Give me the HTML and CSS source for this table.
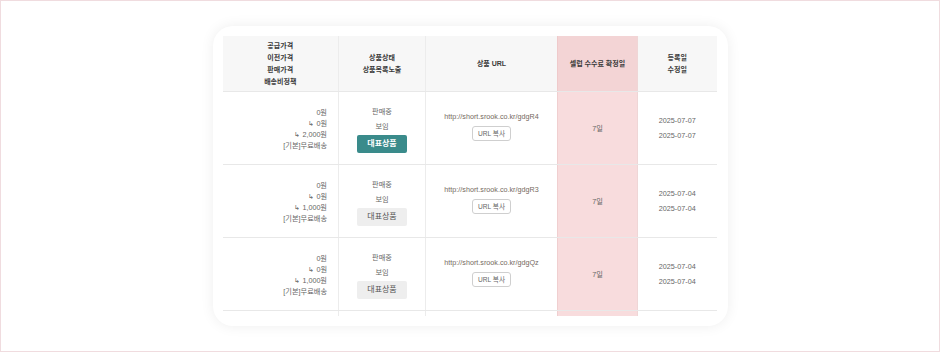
FILE: index.html
```html
<!DOCTYPE html>
<html lang="ko">
<head>
<meta charset="utf-8">
<link rel="stylesheet" href="styles.css">
</head>
<body>
<div class="frame">
  <div class="card">
    <div class="clip">
      <table class="grid">
        <colgroup>
          <col class="c1"><col class="c2"><col class="c3"><col class="c4"><col class="c5">
        </colgroup>
        <thead>
          <tr>
            <th><div class="hcell"><span>공급가격</span><span>이전가격</span><span>판매가격</span><span>배송비정책</span></div></th>
            <th><div class="hcell"><span>상품상태</span><span>상품목록노출</span></div></th>
            <th><div class="hcell"><span>상품 URL</span></div></th>
            <th class="hl"><div class="hcell"><span>셀럽 수수료 확정일</span></div></th>
            <th><div class="hcell"><span>등록일</span><span>수정일</span></div></th>
          </tr>
        </thead>
        <tbody>
          <tr>
            <td><div class="cell price"><span>0원</span><span>↳ 0원</span><span>↳ 2,000원</span><span>[기본]무료배송</span></div></td>
            <td><div class="cell status"><span>판매중</span><span>보임</span><span class="btn on">대표상품</span></div></td>
            <td><div class="cell url"><span class="link">http://short.srook.co.kr/gdgR4</span><span class="copy">URL 복사</span></div></td>
            <td class="hl"><div class="cell">7일</div></td>
            <td><div class="cell dates"><span>2025-07-07</span><span>2025-07-07</span></div></td>
          </tr>
          <tr>
            <td><div class="cell price"><span>0원</span><span>↳ 0원</span><span>↳ 1,000원</span><span>[기본]무료배송</span></div></td>
            <td><div class="cell status"><span>판매중</span><span>보임</span><span class="btn">대표상품</span></div></td>
            <td><div class="cell url"><span class="link">http://short.srook.co.kr/gdgR3</span><span class="copy">URL 복사</span></div></td>
            <td class="hl"><div class="cell">7일</div></td>
            <td><div class="cell dates"><span>2025-07-04</span><span>2025-07-04</span></div></td>
          </tr>
          <tr>
            <td><div class="cell price"><span>0원</span><span>↳ 0원</span><span>↳ 1,000원</span><span>[기본]무료배송</span></div></td>
            <td><div class="cell status"><span>판매중</span><span>보임</span><span class="btn">대표상품</span></div></td>
            <td><div class="cell url"><span class="link">http://short.srook.co.kr/gdgQz</span><span class="copy">URL 복사</span></div></td>
            <td class="hl"><div class="cell">7일</div></td>
            <td><div class="cell dates"><span>2025-07-04</span><span>2025-07-04</span></div></td>
          </tr>
          <tr>
            <td><div class="cell"></div></td>
            <td><div class="cell"></div></td>
            <td><div class="cell"></div></td>
            <td class="hl"><div class="cell"></div></td>
            <td><div class="cell"></div></td>
          </tr>
        </tbody>
      </table>
    </div>
  </div>
</div>
</body>
</html>
```
FILE: styles.css
```css
html, body {
  margin: 0;
  padding: 0;
  background: #fff;
}
body {
  font-family: "Liberation Sans", "Noto Sans CJK KR", sans-serif;
  color: #666;
}
.frame {
  width: 940px;
  height: 352px;
  box-sizing: border-box;
  border: 1px solid #f0dcdf;
  display: flex;
  align-items: center;
  justify-content: center;
}
.card {
  width: 515px;
  height: 300px;
  box-sizing: border-box;
  padding: 10px;
  background: #fff;
  border-radius: 20px;
  box-shadow: 0 0 14px rgba(0, 0, 0, 0.07);
}
.clip {
  height: 280px;
  overflow: hidden;
}
.grid {
  width: 494px;
  table-layout: fixed;
  border-collapse: collapse;
  font-size: 7.2px;
}
.c1 { width: 116px; }
.c2 { width: 87px; }
.c3 { width: 132px; }
.c4 { width: 80px; }
.c5 { width: 79px; }
th, td {
  padding: 0;
  border-left: 1px solid #ececec;
  border-bottom: 1px solid #e8e8e8;
  vertical-align: middle;
}
th:first-child, td:first-child { border-left: none; }
th {
  background: #f7f7f7;
  color: #3a3a3a;
  font-weight: 700;
  font-size: 7px;
}
th.hl { background: #f3d4d5; border-left-color: #efcacb; }
td.hl { background: #f8dcdd; border-left-color: #f0cfd0; }
td.hl + td, th.hl + th { border-left-color: #efd6d6; }
.hcell {
  height: 55px;
  display: flex;
  flex-direction: column;
  align-items: center;
  justify-content: center;
  line-height: 12px;
}
.cell {
  height: 72px;
  display: flex;
  flex-direction: column;
  align-items: center;
  justify-content: center;
  line-height: 11px;
}
.price {
  align-items: flex-end;
  padding-right: 11px;
  padding-top: 2px;
  box-sizing: border-box;
}
.status span { line-height: 15px; }
.btn {
  display: block;
  width: 50px;
  height: 18px;
  line-height: 18px !important;
  margin-top: 1px;
  text-align: center;
  background: #eeeeee;
  color: #555;
  border-radius: 2px;
  font-size: 8px;
}
.btn.on {
  background: #3a8b8b;
  color: #fff;
  font-weight: 700;
}
.url { padding-bottom: 6px; box-sizing: border-box; }
.link { color: #766a61; line-height: 13px; }
.copy {
  display: block;
  margin-top: 3px;
  padding: 0 5px;
  height: 13px;
  line-height: 13px;
  border: 1px solid #cfcfcf;
  border-radius: 3px;
  font-size: 6.6px;
  color: #666;
  background: #fff;
}
.dates span { line-height: 15px; }
```
